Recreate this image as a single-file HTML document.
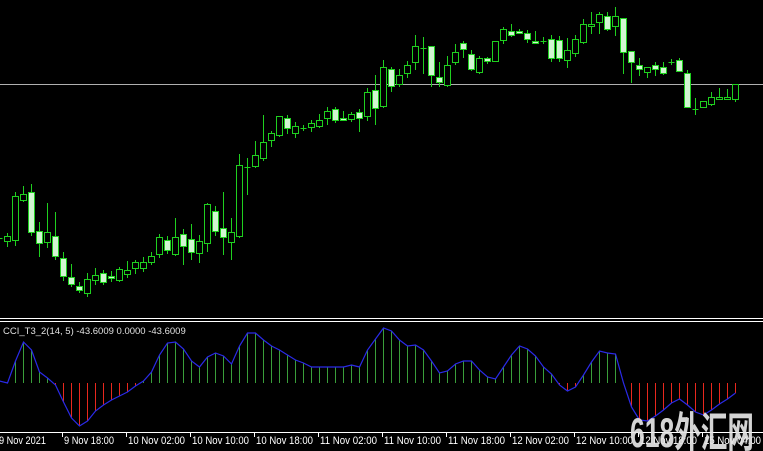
<!DOCTYPE html>
<html><head><meta charset="utf-8"><style>
html,body{margin:0;padding:0;background:#000;width:763px;height:451px;overflow:hidden}
svg{display:block}
.t{font-family:"Liberation Sans",sans-serif;font-size:11px;fill:#fff}
</style></head><body>
<svg id="s" width="763" height="451" xmlns="http://www.w3.org/2000/svg">
<rect width="763" height="451" fill="#000"/>
<line x1="0" y1="84.5" x2="763" y2="84.5" stroke="#b0b0b0" stroke-width="1"/>
<line x1="0" y1="318.5" x2="763" y2="318.5" stroke="#fff"/>
<line x1="0" y1="321.5" x2="763" y2="321.5" stroke="#fff"/>
<line x1="0" y1="432.5" x2="763" y2="432.5" stroke="#fff"/>
<g id="c"></g>
<g id="h" shape-rendering="crispEdges"></g>
<g id="hl"></g>
<text x="3" y="334" font-family="Liberation Sans,sans-serif" font-size="9.5" fill="#e0e0e0">CCI_T3_2(14, 5) -43.6009 0.0000 -43.6009</text>
<g id="ax"></g>
<text x="630" y="447" font-family="'Liberation Sans','Noto Sans CJK SC',sans-serif" font-size="42" font-weight="bold" fill="#e6e6e6" fill-opacity="0.92" textLength="124" lengthAdjust="spacingAndGlyphs">618外汇网</text>
</svg>
<script>
var C=[
[1,238,238,236,240],[1,236,241,233,247],[1,196,240,192,246],[1,194,200,186,202],[0,192,232,184,236],[0,231,243,222,257],[1,232,242,203,248],[0,236,256,212,260],[0,258,276,252,281],[0,277,284,264,287],[0,286,290,282,293],[1,279,293,273,297],[1,275,280,268,285],[0,273,282,270,285],[0,276,278,271,282],[1,269,280,267,282],[1,270,274,261,278],[1,262,268,260,274],[1,262,268,257,272],[1,256,262,252,265],[1,237,254,234,258],[0,240,250,236,254],[1,237,254,218,256],[0,234,246,229,265],[0,239,252,224,260],[1,241,253,235,263],[1,204,243,203,252],[0,211,231,206,236],[0,228,237,192,255],[1,232,242,218,260],[1,165,236,154,238],[1,167,167,158,195],[1,155,166,141,168],[1,142,158,115,161],[1,133,140,131,147],[1,116,135,116,137],[0,118,128,115,134],[1,126,133,122,138],[1,128,128,125,131],[1,123,127,120,132],[1,120,126,114,128],[1,111,118,107,125],[0,109,120,107,123],[0,118,120,111,121],[1,114,119,112,122],[0,112,118,109,132],[1,92,116,88,121],[0,90,108,75,125],[1,67,106,60,108],[0,69,86,67,92],[1,75,84,69,87],[1,65,73,61,78],[1,46,62,35,70],[1,48,48,37,74],[0,46,75,46,87],[0,77,82,62,87],[1,65,85,56,87],[1,52,62,44,65],[0,43,49,41,58],[0,54,69,50,71],[1,58,72,56,74],[0,58,61,57,64],[1,41,61,41,61],[1,29,40,27,44],[0,31,35,24,37],[0,31,33,29,34],[0,33,39,30,43],[0,41,43,31,44],[1,41,41,37,44],[0,39,58,35,62],[0,40,58,36,62],[1,50,60,38,68],[1,39,53,35,57],[1,24,42,19,44],[1,24,26,12,34],[1,14,22,12,34],[0,16,29,12,31],[1,16,26,7,36],[0,18,52,18,74],[0,51,62,51,83],[0,65,69,58,76],[1,67,72,67,78],[0,65,69,62,76],[0,67,73,62,75],[1,62,62,59,65],[0,60,71,58,71],[0,73,107,70,108],[1,109,109,98,115],[1,101,107,101,107],[1,97,104,92,106],[1,97,99,88,100],[1,97,99,89,100],[1,84,99,84,102]];
var V=[381,383,361,342,350,372,378,385,402,418,426,421,411,405,400,396,392,386,381,372,355,343,342,349,361,367,357,353,356,364,346,333,333,340,346,350,355,360,363,367,367,367,367,367,365,367,350,339,328,331,340,346,345,350,361,373,371,364,361,361,370,377,379,367,355,346,349,356,367,374,385,391,387,375,362,351,353,354,383,407,420,421,416,410,403,399,405,412,415,410,404,399,393];
var ns="http://www.w3.org/2000/svg";
function el(p,t,a){var e=document.createElementNS(ns,t);for(var k in a)e.setAttribute(k,a[k]);p.appendChild(e);return e;}
var g=document.getElementById('c'),G="#1fd01f";
C.forEach(function(d,i){var x=8*i-1+0.5;
el(g,'line',{x1:x,x2:x,y1:d[3],y2:d[4],stroke:G,'stroke-width':1});
var h=Math.max(d[2]-d[1],0);
if(h<2){el(g,'line',{x1:x-3,x2:x+3,y1:d[1]+.5,y2:d[1]+.5,stroke:G});}
else el(g,'rect',{x:x-3,y:d[1]+.5,width:6,height:h,fill:d[0]?"#000":"#d2f5d2",stroke:G,'stroke-width':1});
});
var hh=document.getElementById('h'),Z=383,pts=[];
V.forEach(function(v,i){var x=8*i-1;pts.push((x+.5)+','+v);
var top=Math.min(v,Z),ht=Math.abs(v-Z);
if(ht>0)el(hh,'rect',{x:x,y:top,width:1,height:ht,fill:v<Z?"#3a9e3a":"#e8281e"});});
el(document.getElementById('hl'),'polyline',{points:pts.join(' '),fill:'none',stroke:'#2a2ae8','stroke-width':1.2});
var ax=document.getElementById('ax');
var L=["9 Nov 2021","9 Nov 18:00","10 Nov 02:00","10 Nov 10:00","10 Nov 18:00","11 Nov 02:00","11 Nov 10:00","11 Nov 18:00","12 Nov 02:00","12 Nov 10:00","12 Nov 18:00","15 Nov 04:00"];
L.forEach(function(s,i){var x=i==0?-1:64*i-2;
if(i>0)el(ax,'line',{x1:x+.5,x2:x+.5,y1:432,y2:437,stroke:'#fff'});
var w=i==0?47:(s.length==11?50:57);
var t=el(ax,'text',{x:i==0?-1:x+2,y:444,'class':'t',textLength:w,lengthAdjust:'spacingAndGlyphs'});t.textContent=s;});
</script>
</body></html>
